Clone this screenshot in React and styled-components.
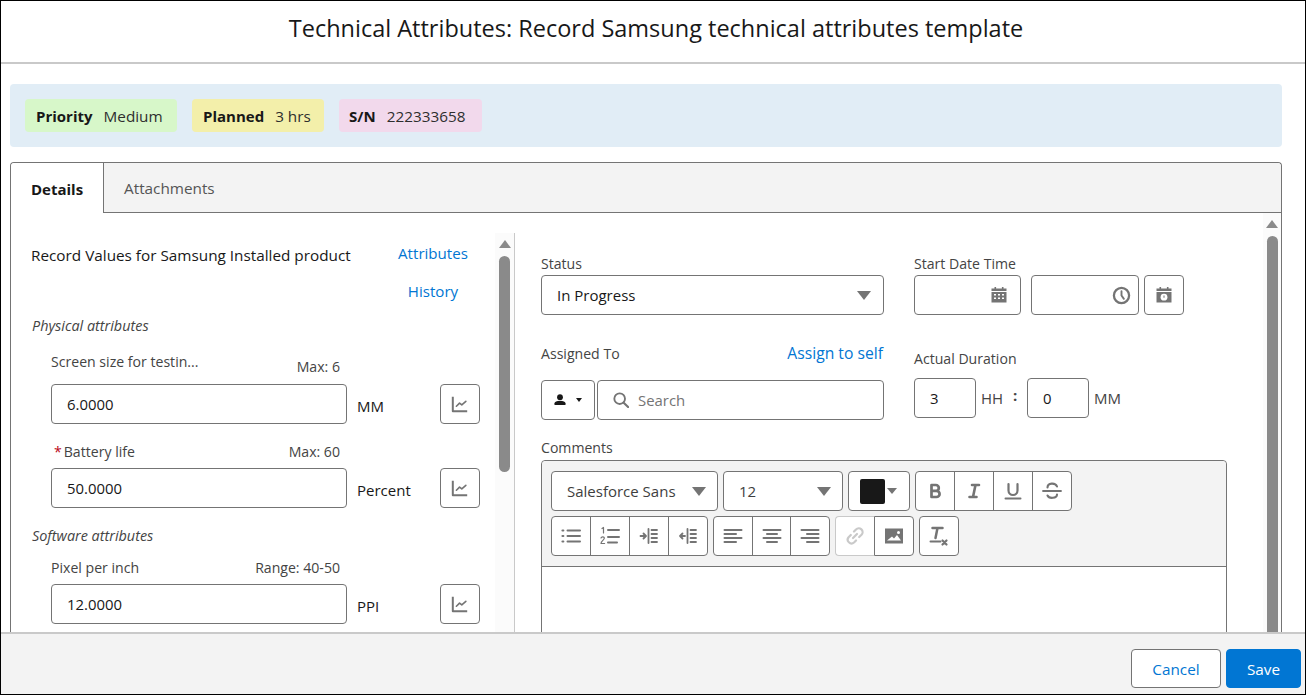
import React from "react";
import styled, { createGlobalStyle } from "styled-components";

const Global = createGlobalStyle`
  * { box-sizing: border-box; }
  html, body { margin: 0; padding: 0; height: 100%; overflow: hidden; background: #fff; }
  body { font-family: "Open Sans", "Noto Sans", sans-serif; font-size: 15px; color: #181818; }
`;

const Frame = styled.div`
  height: 695px; width: 1306px; border: 1px solid #000; display: flex; flex-direction: column; background: #fff; overflow: hidden;
`;
const Header = styled.header`
  flex: none; height: 63px; border-bottom: 2px solid #c9c9c9; display: flex; justify-content: center; padding-top: 9px; padding-left: 6px;
`;
const Title = styled.h1`
  margin: 0; font-size: 23.5px; line-height: 36px; font-weight: 400; color: #181818;
`;
const Main = styled.main`
  flex: 1; min-height: 0; overflow: hidden; padding: 20px 23px 0 9px;
`;
const InfoBar = styled.div`
  height: 63px; background: #e1edf6; border-radius: 4px; display: flex; align-items: center; gap: 15px; padding: 0 15px; margin-bottom: 15px;
`;
const Badge = styled.div`
  height: 33px; width: ${p => p.$w}px; background: ${p => p.$bg}; border-radius: 4px; display: flex; align-items: center; gap: ${p => p.$gap}px; padding-left: ${p => p.$pad}px; line-height: 20px;
`;
const BadgeKey = styled.b` font-weight: 700; font-size: 15px; `;
const BadgeVal = styled.span` font-size: 15.3px; color: #2e2e2e; `;
const Tabs = styled.section`
  border: 1px solid #747474; border-bottom: 0; border-radius: 4px 4px 0 0; height: 560px; display: flex; flex-direction: column;
`;
const TabStrip = styled.div`
  flex: none; height: 50px; display: flex; background: #f3f3f3; border-bottom: 1px solid #747474; border-radius: 4px 4px 0 0;
`;
const Tab = styled.div`
  width: ${p => p.$w}px; height: ${p => (p.$active ? 50 : 49)}px; display: flex; align-items: center; padding: 1px 0 0 ${p => p.$pad}px;
  font-size: ${p => (p.$active ? 15 : 15.3)}px;
  font-weight: ${p => (p.$active ? 700 : 400)}; color: ${p => (p.$active ? "#181818" : "#555")}; background: ${p => (p.$active ? "#fff" : "transparent")};
  border-right: ${p => (p.$active ? "1px solid #747474" : "0")}; border-top-left-radius: 4px;
`;
const Panels = styled.div` flex: 1; min-height: 0; display: flex; overflow: hidden; `;
const LeftPane = styled.div`
  flex: none; width: 504px; margin-top: 20px; display: flex; border-right: 1px solid #c9c9c9;
`;
const LeftBody = styled.div` flex: none; width: 484px; padding: 12px 0 0 20px; `;
const Track = styled.div`
  flex: none; width: ${p => p.$w}px; background: #fbfbfb; display: flex; flex-direction: column; align-items: center; padding-top: ${p => p.$top}px;
`;
const ArrowUp = styled.div`
  width: 0; height: 0; border-left: 6.5px solid transparent; border-right: 6.5px solid transparent; border-bottom: 8px solid #8a8a8a; margin-bottom: ${p => p.$gap}px;
`;
const Thumb = styled.div`
  width: 11px; height: ${p => p.$h}px; background: #8a8a8a; border-radius: 5.5px 5.5px ${p => (p.$open ? "0 0" : "5.5px 5.5px")};
`;
const TopRow = styled.div` display: flex; justify-content: space-between; padding-right: 27px; `;
const RecordTitle = styled.div` font-size: 15.3px; line-height: 20px; white-space: nowrap; `;
const LinkCol = styled.div` display: flex; flex-direction: column; align-items: center; gap: 18px; width: 70px; margin-top: -2px; `;
const Link = styled.a` color: #0176d3; font-size: 15.1px; line-height: 20px; white-space: nowrap; `;
const AssignLink = styled(Link)` font-size: 15.7px; margin: -1px 1px 0 0; `;
const SectionTitle = styled.div` font-style: italic; font-size: 14.4px; line-height: 20px; color: #444; margin: ${p => p.$mt}px 0 0 1px; `;
const Field = styled.div` margin: ${p => p.$mt}px 0 0 20px; `;
const FieldHead = styled.div`
  width: 289px; display: flex; justify-content: space-between; align-items: flex-start; height: ${p => p.$h}px; margin-bottom: ${p => p.$mb}px; color: #444; font-size: 14.1px; line-height: 20px;
`;
const MaxNote = styled.span` margin-top: ${p => p.$mt || 0}px; `;
const Req = styled.span` color: #ba0517; margin: 0 2px 0 3px; `;
const FieldRow = styled.div` display: flex; align-items: stretch; `;
const Input = styled.div`
  flex: none; width: ${p => p.$w}px; height: 40px; border: 1px solid #747474; border-radius: 4px; background: #fff; display: flex; align-items: center; margin-left: ${p => p.$ml || 0}px; padding-left: ${p => p.$pad || 15}px; padding-right: ${p => p.$pr || 0}px; justify-content: ${p => p.$justify || "flex-start"}; font-size: 14.9px; color: #181818;
`;
const Unit = styled.span`
  flex: none; width: 93px; padding-left: 10px; padding-top: 12px; line-height: 20px; font-size: 15px;
`;
const IconBtn = styled.div`
  flex: none; width: ${p => p.$w || 40}px; height: 40px; margin-left: ${p => p.$ml || 0}px; border: 1px solid #747474; border-radius: 4px; background: #fff; display: flex; align-items: center; justify-content: center;
`;
const RightPane = styled.div` flex: 1; min-width: 0; display: flex; `;
const RightBody = styled.div` flex: none; width: 748px; padding: 41px 0 0 26px; `;
const TopGrid = styled.div` display: grid; grid-template-columns: 343px 1fr; column-gap: 30px; `;
const Stack = styled.div` display: flex; flex-direction: column; `;
const Label = styled.div` font-size: 14.1px; line-height: 20px; color: #444; margin-top: ${p => p.$mt || 0}px; margin-bottom: ${p => p.$mb || 0}px; `;
const LabelRow = styled.div` display: flex; justify-content: space-between; margin: 29px 0 16px; line-height: 20px; `;
const Select = styled(Input)` justify-content: space-between; padding-right: 12px; font-size: 15px; `;
const ArrowDown = styled.div`
  flex: none; width: 0; height: 0; border-left: ${p => p.$s || 7}px solid transparent; border-right: ${p => p.$s || 7}px solid transparent; border-top: ${p => (p.$s ? p.$s + 1 : 9)}px solid ${p => p.$c || "#747474"};
`;
const SearchRow = styled.div` display: flex; gap: 2px; `;
const ScopeBtn = styled(IconBtn)` gap: 10px; `;
const SearchBox = styled(Input)` gap: 9px; color: #747474; flex: 1; `;
const DateRow = styled.div` display: flex; `;
const DurRow = styled.div` display: flex; align-items: center; margin-top: 9px; font-size: 15px; color: #444; `;
const DurUnit = styled.span` margin-left: 5px; width: ${p => p.$w}px; `;
const Colon = styled.span` width: 16px; padding-left: 2px; font-weight: 700; margin-top: -6px; `;
const Editor = styled.div` width: 686px; height: 300px; border: 1px solid #747474; border-radius: 4px 4px 0 0; `;
const Toolbar = styled.div`
  background: #f3f3f3; border-bottom: 1px solid #747474; padding: 10px 9px; display: flex; flex-direction: column; gap: 5px; border-radius: 4px 4px 0 0;
`;
const ToolRow = styled.div` display: flex; gap: 5px; `;
const Group = styled.div`
  flex: none; width: ${p => p.$w}px; display: flex; height: 40px; border: 1px solid #747474; border-radius: 4px; background: #fff;
`;
const Tool = styled.div`
  flex: 1; display: flex; align-items: center; justify-content: center; border-left: 1px solid #747474;
  &:first-child { border-left: 0; }
`;
const Pair = styled.div` flex: none; display: flex; height: 40px; `;
const DimTool = styled.div`
  width: 39px; display: flex; align-items: center; justify-content: center; background: #fff; border: 1px solid #c9c9c9; border-right: 0; border-radius: 4px 0 0 4px;
`;
const EdgeTool = styled.div`
  width: 40px; display: flex; align-items: center; justify-content: center; background: #fff; border: 1px solid #747474; border-radius: 0 4px 4px 0;
`;
const DropBtn = styled(Input)` justify-content: space-between; padding-right: 11px; color: #3e3e3e; font-size: 15px; `;
const Swatch = styled.div` width: 25px; height: 25px; background: #181818; border-radius: 2px; `;
const ColorBtn = styled(IconBtn)` gap: 2px; padding-right: 2px; `;
const Footer = styled.footer`
  flex: none; height: 62px; background: #f3f3f3; border-top: 2px solid #c9c9c9; display: flex; justify-content: flex-end; align-items: flex-start; gap: 5px; padding: 15px 4px 0 0;
`;
const FootBtn = styled.button`
  width: ${p => p.$w}px; height: 39px; border-radius: 4px; font: inherit; font-size: 15.3px; padding: 0; cursor: pointer;
  border: 1px solid ${p => (p.$primary ? "#0176d3" : "#747474")}; background: ${p => (p.$primary ? "#0176d3" : "#fff")}; color: ${p => (p.$primary ? "#fff" : "#0176d3")};
`;

const G = "#747474";
const Svg = ({ s = 20, c = G, children, vb = "0 0 20 20" }) => (
  <svg width={s} height={s} viewBox={vb} fill="none" stroke={c} strokeWidth="2" strokeLinecap="round" strokeLinejoin="round">{children}</svg>
);
const ChartIcon = () => <Svg s={18}><path d="M2 2V18h16" strokeWidth="2.2" strokeLinecap="butt" /><path d="M6 12.5l3.5-3.5 2.5 2 4.5-4" strokeWidth="1.8" /></Svg>;
const CalendarIcon = () => (
  <svg width="16" height="16" viewBox="0 0 16 16" fill={G}>
    <rect x="3.5" y="0" width="1.6" height="3" /><rect x="10.9" y="0" width="1.6" height="3" />
    <rect x="0.5" y="1.5" width="15" height="2.5" />
    <path fillRule="evenodd" d="M.5 5h15v10.5H.5z M3 7v1.5h2V7z M7 7v1.5h2V7z M11 7v1.5h2V7z M3 10.5V12h2v-1.5z M7 10.5V12h2v-1.5z M11 10.5V12h2v-1.5z" />
  </svg>
);
const ClockIcon = () => <Svg s={19}><circle cx="10" cy="10" r="8" strokeWidth="2.4" /><path d="M10 5.5V10l2.5 3.5" strokeWidth="2" /></Svg>;
const CalClockIcon = () => (
  <svg width="16" height="16" viewBox="0 0 16 16" fill={G}>
    <rect x="3.5" y="0" width="1.6" height="3" /><rect x="10.9" y="0" width="1.6" height="3" />
    <rect x="0.5" y="1.5" width="15" height="2.5" />
    <path d="M.5 5h15v10.5H.5z" />
    <circle cx="8" cy="10.2" r="3.4" fill="#fff" />
    <path d="M7.5 8.5h1v2.2h-1z" />
  </svg>
);
const SearchIcon = () => <Svg s={16} vb="0 0 18 18"><circle cx="7.5" cy="7.5" r="6" strokeWidth="2.1" /><path d="M12 12l5 5" strokeWidth="2.4" /></Svg>;
const PersonIcon = () => (
  <svg width="12" height="12" viewBox="0 0 12 12" fill="#181818"><circle cx="6" cy="3.2" r="2.9" /><path d="M.5 9.3c0-1.6 2.4-2.5 5.5-2.5s5.5.9 5.5 2.5V11H.5z" /></svg>
);
const BoldIcon = () => <Svg><path d="M6.5 4h4.4a2.9 2.9 0 010 5.8H6.5zM6.5 9.8h5a3.1 3.1 0 010 6.2h-5z" strokeWidth="2.7" /></Svg>;
const ItalicIcon = () => <Svg><path d="M8 4h7M5.5 16h7M11.5 4L9 16" strokeWidth="2.6" /></Svg>;
const UnderIcon = () => <Svg><path d="M5.5 3v6.5a4.5 4.5 0 009 0V3" strokeWidth="2.2" /><path d="M2.5 17.5h15" /></Svg>;
const StrikeIcon = () => <Svg><path d="M15 5.5C13.5 1.5 5.5 1.5 5.5 6.5" strokeWidth="2.1" /><path d="M1 10h18" strokeWidth="1.8" /><path d="M5.5 14.5c1.5 3.5 9.5 3 9.5-1" strokeWidth="2.1" /></Svg>;
const ListIcon = () => <Svg><path d="M6.5 4.5H19M6.5 10H19M6.5 15.5H19" strokeWidth="2" /><path d="M1.5 4.5h.8M1.5 10h.8M1.5 15.5h.8" strokeWidth="2.2" /></Svg>;
const OrderedIcon = () => <Svg><path d="M8 4H19M8 11H19M8 16.5H17" strokeWidth="2" /><path d="M2 2.5L3.5 1.5V7M1 12c.5-1.5 3.5-1.5 3.3.3C4.2 14 1 15 1 17.5h3.6" strokeWidth="1.2" /></Svg>;
const IndentIcon = () => <Svg><path d="M1.5 10h5M4.5 7.5L7 10l-2.5 2.5" strokeWidth="1.8" /><path d="M9.5 3v14" strokeWidth="1.8" /><path d="M12.5 4H18M12.5 8H18M12.5 12H18M12.5 16H18" strokeWidth="1.8" /></Svg>;
const OutdentIcon = () => <Svg><path d="M2 10h5M4.5 7.5L2 10l2.5 2.5" strokeWidth="1.8" /><path d="M9.5 3v14" strokeWidth="1.8" /><path d="M12.5 4H18M12.5 8H18M12.5 12H18M12.5 16H18" strokeWidth="1.8" /></Svg>;
const AlignIcon = ({ lines }) => <Svg>{lines.map((d, i) => <path key={i} d={d} strokeWidth="2" />)}</Svg>;
const LinkIcon = () => <Svg c="#c9c9c9"><path d="M8 12l4-4" strokeWidth="2.2" /><path d="M9 5.5l2-2a3.8 3.8 0 015.5 5.3l-2.3 2.2M11 14.5l-2 2a3.8 3.8 0 01-5.4-5.3L5.8 9" strokeWidth="2.2" /></Svg>;
const ImageIcon = () => (
  <svg width="20" height="20" viewBox="0 0 20 20" fill={G}>
    <path fillRule="evenodd" d="M1 2.5h18v15H1z M3 14.5h14l-4-5.5-3 3.5-2-2z M14.5 5a1.5 1.5 0 100 3 1.5 1.5 0 000-3z" />
  </svg>
);
const ClearIcon = () => <Svg s={22} vb="0 0 22 22"><path d="M4.5 3h10M9.5 3L7.5 13" strokeWidth="2.5" /><path d="M2.5 16.5h10" strokeWidth="2" /><path d="M14.5 15.5l4 4M18.5 15.5l-4 4" strokeWidth="2.2" /></Svg>;

const AttrField = ({ mt, head, value, unit }) => (
  <Field $mt={mt}>
    {head}
    <FieldRow>
      <Input $w={296}>{value}</Input>
      <Unit>{unit}</Unit>
      <IconBtn><ChartIcon /></IconBtn>
    </FieldRow>
  </Field>
);

export default function App() {
  return (
    <Frame>
      <Global />
      <Header><Title>Technical Attributes: Record Samsung technical attributes template</Title></Header>
      <Main>
        <InfoBar>
          <Badge $w={152} $bg="#d7f7c9" $pad={11} $gap={11}><BadgeKey>Priority</BadgeKey><BadgeVal>Medium</BadgeVal></Badge>
          <Badge $w={132} $bg="#f3efaa" $pad={11} $gap={11}><BadgeKey>Planned</BadgeKey><BadgeVal>3 hrs</BadgeVal></Badge>
          <Badge $w={143} $bg="#f2d9ec" $pad={10} $gap={11}><BadgeKey>S/N</BadgeKey><BadgeVal>222333658</BadgeVal></Badge>
        </InfoBar>
        <Tabs>
          <TabStrip>
            <Tab $active $w={93} $pad={20}>Details</Tab>
            <Tab $w={140} $pad={20}>Attachments</Tab>
          </TabStrip>
          <Panels>
            <LeftPane>
              <LeftBody>
                <TopRow>
                  <RecordTitle>Record Values for Samsung Installed product</RecordTitle>
                  <LinkCol><Link>Attributes</Link><Link>History</Link></LinkCol>
                </TopRow>
                <SectionTitle $mt={15}>Physical attributes</SectionTitle>
                <AttrField mt={16} value="6.0000" unit="MM"
                  head={<FieldHead $h={32} $mb={0}><span>Screen size for testin...</span><MaxNote $mt={5}>Max: 6</MaxNote></FieldHead>} />
                <AttrField mt={18} value="50.0000" unit="Percent"
                  head={<FieldHead $h={20} $mb={6}><span><Req>*</Req>Battery life</span><MaxNote>Max: 60</MaxNote></FieldHead>} />
                <SectionTitle $mt={18}>Software attributes</SectionTitle>
                <AttrField mt={12} value="12.0000" unit="PPI"
                  head={<FieldHead $h={20} $mb={6}><span>Pixel per inch</span><MaxNote>Range: 40-50</MaxNote></FieldHead>} />
              </LeftBody>
              <Track $w={19} $top={7}><ArrowUp $gap={8} /><Thumb $h={216} /></Track>
            </LeftPane>
            <RightPane>
              <RightBody>
                <TopGrid>
                  <Stack>
                    <Label $mb={1}>Status</Label>
                    <Select $w={343}><span>In Progress</span><ArrowDown /></Select>
                    <LabelRow><Label>Assigned To</Label><AssignLink>Assign to self</AssignLink></LabelRow>
                    <SearchRow>
                      <ScopeBtn $w={54}><PersonIcon /><ArrowDown $s={3.5} $c="#181818" /></ScopeBtn>
                      <SearchBox $w={287}><SearchIcon />Search</SearchBox>
                    </SearchRow>
                  </Stack>
                  <Stack>
                    <Label $mb={1}>Start Date Time</Label>
                    <DateRow>
                      <Input $w={107} $justify="flex-end" $pr={13}><CalendarIcon /></Input>
                      <Input $w={108} $ml={10} $justify="flex-end" $pr={7}><ClockIcon /></Input>
                      <IconBtn $ml={5}><CalClockIcon /></IconBtn>
                    </DateRow>
                    <Label $mt={34}>Actual Duration</Label>
                    <DurRow>
                      <Input $w={62}>3</Input><DurUnit $w={30}>HH</DurUnit><Colon>:</Colon>
                      <Input $w={62}>0</Input><DurUnit $w={30}>MM</DurUnit>
                    </DurRow>
                  </Stack>
                </TopGrid>
                <Label $mt={18} $mb={2}>Comments</Label>
                <Editor>
                  <Toolbar>
                    <ToolRow>
                      <DropBtn $w={167}><span>Salesforce Sans</span><ArrowDown /></DropBtn>
                      <DropBtn $w={120}><span>12</span><ArrowDown /></DropBtn>
                      <ColorBtn $w={62}><Swatch /><ArrowDown $s={5} /></ColorBtn>
                      <Group $w={157}>
                        <Tool><BoldIcon /></Tool><Tool><ItalicIcon /></Tool><Tool><UnderIcon /></Tool><Tool><StrikeIcon /></Tool>
                      </Group>
                    </ToolRow>
                    <ToolRow>
                      <Group $w={157}>
                        <Tool><ListIcon /></Tool><Tool><OrderedIcon /></Tool><Tool><IndentIcon /></Tool><Tool><OutdentIcon /></Tool>
                      </Group>
                      <Group $w={117}>
                        <Tool><AlignIcon lines={["M1.5 4H18.5", "M1.5 8H13", "M1.5 12H18.5", "M1.5 16H13"]} /></Tool>
                        <Tool><AlignIcon lines={["M1.5 4H18.5", "M5 8H15", "M1.5 12H18.5", "M5 16H15"]} /></Tool>
                        <Tool><AlignIcon lines={["M1.5 4H18.5", "M7 8H18.5", "M1.5 12H18.5", "M7 16H18.5"]} /></Tool>
                      </Group>
                      <Pair>
                        <DimTool><LinkIcon /></DimTool><EdgeTool><ImageIcon /></EdgeTool>
                      </Pair>
                      <IconBtn><ClearIcon /></IconBtn>
                    </ToolRow>
                  </Toolbar>
                </Editor>
              </RightBody>
              <Track $w={18} $top={7}><ArrowUp $gap={8} /><Thumb $h={500} $open /></Track>
            </RightPane>
          </Panels>
        </Tabs>
      </Main>
      <Footer>
        <FootBtn $w={90}>Cancel</FootBtn>
        <FootBtn $w={75} $primary>Save</FootBtn>
      </Footer>
    </Frame>
  );
}
